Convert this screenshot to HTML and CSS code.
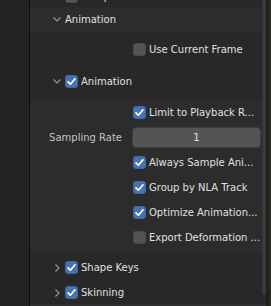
FILE: index.html
```html
<!DOCTYPE html>
<html lang="en">
<head>
    <meta charset="UTF-8">
    <meta name="viewport" content="width=device-width, initial-scale=1.0">
    <title>Export Options</title>
    <link rel="stylesheet" href="styles.css">
</head>
<body>
    <div class="main">
        <div class="side"></div>
        <div class="region">
            <div class="content">
                <!-- cut off sub-panel from above -->
                <div class="row head top">
                    <span class="chev"><svg width="8" height="5" viewBox="0 0 8 5"><path d="M0.5 0.5 L4 4 L7.5 0.5"/></svg></span>
                    <span class="box"></span>
                    <span class="txt">Compression</span>
                </div>

                <div class="row head band">
                    <span class="chev"><svg width="8" height="5" viewBox="0 0 8 5"><path d="M0.5 0.5 L4 4 L7.5 0.5"/></svg></span>
                    <span class="txt">Animation</span>
                </div>

                <div class="body">
                    <div class="row prop">
                        <span class="label"></span>
                        <span class="ctl"><span class="box"></span><span class="txt">Use Current Frame</span></span>
                    </div>

                    <div class="row head sub-head">
                        <span class="chev"><svg width="8" height="5" viewBox="0 0 8 5"><path d="M0.5 0.5 L4 4 L7.5 0.5"/></svg></span>
                        <span class="box on"><svg width="13" height="13" viewBox="0 0 13 13"><path d="M3 6.8 L5.4 9.2 L10 3.8"/></svg></span>
                        <span class="txt">Animation</span>
                    </div>

                    <div class="sub-body">
                        <div class="row prop">
                            <span class="label"></span>
                            <span class="ctl"><span class="box on"><svg width="13" height="13" viewBox="0 0 13 13"><path d="M3 6.8 L5.4 9.2 L10 3.8"/></svg></span><span class="txt">Limit to Playback R...</span></span>
                        </div>
                        <div class="row prop">
                            <span class="label">Sampling Rate</span>
                            <span class="ctl"><span class="field">1</span></span>
                        </div>
                        <div class="row prop">
                            <span class="label"></span>
                            <span class="ctl"><span class="box on"><svg width="13" height="13" viewBox="0 0 13 13"><path d="M3 6.8 L5.4 9.2 L10 3.8"/></svg></span><span class="txt">Always Sample Ani...</span></span>
                        </div>
                        <div class="row prop">
                            <span class="label"></span>
                            <span class="ctl"><span class="box on"><svg width="13" height="13" viewBox="0 0 13 13"><path d="M3 6.8 L5.4 9.2 L10 3.8"/></svg></span><span class="txt">Group by NLA Track</span></span>
                        </div>
                        <div class="row prop">
                            <span class="label"></span>
                            <span class="ctl"><span class="box on"><svg width="13" height="13" viewBox="0 0 13 13"><path d="M3 6.8 L5.4 9.2 L10 3.8"/></svg></span><span class="txt">Optimize Animation...</span></span>
                        </div>
                        <div class="row prop">
                            <span class="label"></span>
                            <span class="ctl"><span class="box"></span><span class="txt">Export Deformation ...</span></span>
                        </div>
                    </div>

                    <div class="row head closed">
                        <span class="chev"><svg width="5" height="8" viewBox="0 0 5 8"><path d="M0.5 0.5 L4 4 L0.5 7.5"/></svg></span>
                        <span class="box on"><svg width="13" height="13" viewBox="0 0 13 13"><path d="M3 6.8 L5.4 9.2 L10 3.8"/></svg></span>
                        <span class="txt">Shape Keys</span>
                    </div>
                    <div class="row head closed">
                        <span class="chev"><svg width="5" height="8" viewBox="0 0 5 8"><path d="M0.5 0.5 L4 4 L0.5 7.5"/></svg></span>
                        <span class="box on"><svg width="13" height="13" viewBox="0 0 13 13"><path d="M3 6.8 L5.4 9.2 L10 3.8"/></svg></span>
                        <span class="txt">Skinning</span>
                    </div>
                </div>
            </div>
            <div class="scroll"></div>
        </div>
        <div class="edge"></div>
    </div>
</body>
</html>
```

FILE: styles.css
```css
*{
    margin: 0px;
    padding: 0px;
    box-sizing: border-box;
}
body{
    background-color: #232323;
    font-family: "DejaVu Sans", sans-serif;
    font-size: 10px;
    color: #dcdcdc;
    overflow: hidden;
}
.main{
    width: 271px;
    height: 306px;
    display: flex;
    overflow: hidden;
}
.side{
    width: 30px;
    background-color: #232323;
    border-right: 1px solid #0e0e0e;
}
.region{
    position: relative;
    flex: 1;
    background-color: #282828;
    border-bottom: 2px solid #2f2f2f;
    overflow: hidden;
}
.content{
    margin-top: -16px;
    width: 232px;
}
.row{
    height: 25px;
    display: flex;
    align-items: center;
}
.row.top{
    height: 23px;
    padding-top: 2px;
}
.head{
    padding-left: 23px;
}
.band{
    background-color: #2d2d2d;
}
.body{
    padding-top: 5px;
}
.sub-head{
    margin-top: 7px;
}
.sub-body{
    margin-top: 6px;
    padding-bottom: 4px;
    background-color: #2c2c2c;
    border-radius: 0px 0px 4px 4px;
}
.closed{
    margin-top: 1px;
    padding-left: 25px;
}
.closed + .closed{
    margin-top: 0px;
}
.chev{
    width: 8px;
    display: flex;
    align-items: center;
    margin-right: 4px;
}
.closed .chev{
    width: 6px;
    margin-right: 4px;
}
.chev svg path{
    fill: none;
    stroke: #9c9c9c;
    stroke-width: 1.1;
}
.box{
    width: 13px;
    height: 13px;
    border-radius: 3px;
    background-color: #545454;
    border: 1px solid #4a4a4a;
    display: flex;
    margin-right: 3px;
    flex-shrink: 0;
}
.box svg{
    margin: -1px;
}
.box.on{
    background-color: #4772b3;
    border-color: #3f67a3;
}
.box svg path{
    fill: none;
    stroke: #ffffff;
    stroke-width: 1.7;
    stroke-linecap: round;
    stroke-linejoin: round;
}
.txt{
    white-space: nowrap;
    color: #e0e0e0;
}
.prop .label{
    width: 92px;
    text-align: right;
    color: #c4c4c4;
    margin-right: 10px;
    white-space: nowrap;
}
.ctl{
    flex: 1;
    display: flex;
    align-items: center;
    padding-left: 1px;
}
.field{
    width: 129px;
    height: 21px;
    margin-left: -1px;
    background-color: #545454;
    border: 1px solid #3e3e3e;
    border-radius: 4px;
    display: flex;
    align-items: center;
    justify-content: center;
    color: #e6e6e6;
}
.scroll{
    position: absolute;
    left: 232px;
    top: 0px;
    width: 4px;
    height: 295px;
    background-color: #393939;
    border-radius: 0px 0px 2px 2px;
}
.edge{
    width: 5px;
    background-color: #1f1f1f;
    border-right: 2px solid #2d2b20;
}
```
